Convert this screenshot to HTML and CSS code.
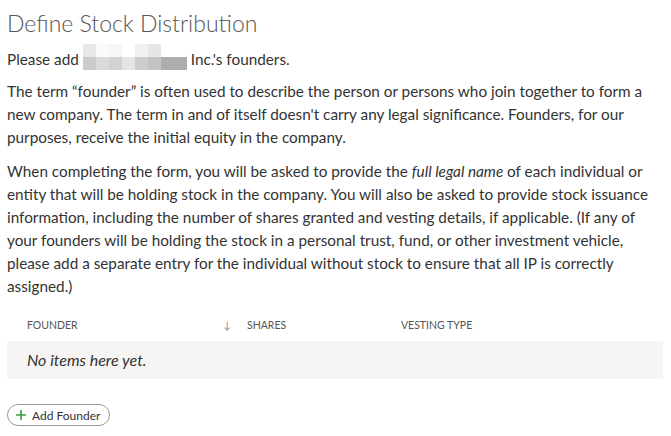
FILE: index.html
```html
<!DOCTYPE html>
<html lang="en">
<head>
    <meta charset="UTF-8">
    <title>Define Stock Distribution</title>
    <link rel="stylesheet" href="styles.css">
</head>
<body>
    <div class="page">
        <h1>Define Stock Distribution</h1>
        <p class="intro">
            Please add
            <span class="redacted">
                <span class="px" style="background:#e8e8e8"></span><span class="px" style="background:#fafafa"></span><span class="px" style="background:#f6f6f6"></span><span class="px" style="background:#fff"></span><span class="px" style="background:#f1f1f1"></span><span class="px" style="background:#e6e6e6"></span><span class="px" style="background:#fff"></span><span class="px" style="background:#fff"></span>
                <span class="px" style="background:#cbcbcb"></span><span class="px" style="background:#dadada"></span><span class="px" style="background:#d2d2d2"></span><span class="px" style="background:#e4e4e4"></span><span class="px" style="background:#cdcdcd"></span><span class="px" style="background:#c4c4c4"></span><span class="px" style="background:#adadad"></span><span class="px" style="background:#adadad"></span>
            </span>
            Inc.'s founders.
        </p>

        <p>The term “founder” is often used to describe the person or persons who join together to form a<br>
        new company. The term in and of itself doesn't carry any legal significance. Founders, for our<br>
        purposes, receive the initial equity in the company.</p>

        <p>When completing the form, you will be asked to provide the <em>full legal name</em> of each individual or<br>
        entity that will be holding stock in the company. You will also be asked to provide stock issuance<br>
        information, including the number of shares granted and vesting details, if applicable. (If any of<br>
        your founders will be holding the stock in a personal trust, fund, or other investment vehicle,<br>
        please add a separate entry for the individual without stock to ensure that all IP is correctly<br>
        assigned.)</p>

        <div class="table">
            <div class="table-head">
                <div class="col col-founder">Founder <span class="sort">&#8595;</span></div>
                <div class="col col-shares">Shares</div>
                <div class="col col-vesting">Vesting Type</div>
            </div>
            <div class="table-empty">No items here yet.</div>
        </div>

        <button class="add-btn">
            <svg width="12" height="12" viewBox="0 0 12 12"><path d="M6 1v10M1 6h10" stroke="#3c9a3c" stroke-width="1.6" fill="none"/></svg>
            Add Founder
        </button>
    </div>
</body>
</html>
```

FILE: styles.css
```css
* {
    margin: 0;
    padding: 0;
    box-sizing: border-box;
}

body {
    font-family: Lato, 'Noto Sans', sans-serif;
    font-size: 15.3px;
    line-height: 23px;
    color: #333;
    background: #fff;
}

.page {
    padding: 8px 7px;
    width: 671px;
}

h1 {
    font-size: 23px;
    font-weight: 300;
    color: #555;
    line-height: 30px;
    margin-bottom: 10px;
}

p {
    margin-bottom: 11px;
}

.intro {
    display: flex;
    align-items: center;
    gap: 4px;
    margin-bottom: 9px;
}

.redacted {
    display: grid;
    grid-template-columns: repeat(8, 13px);
    grid-template-rows: 13px 13px;
    margin-top: -6px;
}

.table {
    width: 656px;
    margin-top: 1px;
}

.table-head {
    display: flex;
    font-size: 10.5px;
    text-transform: uppercase;
    color: #555;
    height: 32px;
    align-items: center;
}

.col {
    padding-left: 20px;
}

.col-founder {
    width: 220px;
    display: flex;
    justify-content: space-between;
}

.sort {
    color: #888;
    font-size: 10px;
    margin-right: -4px;
}

.col-shares {
    width: 154px;
}

.table-empty {
    background: #f6f5f3;
    height: 38px;
    line-height: 38px;
    padding-left: 20px;
    font-style: italic;
    font-size: 16px;
    color: #333;
}

.add-btn {
    margin-top: 25px;
    display: flex;
    align-items: center;
    gap: 5px;
    height: 22px;
    padding: 0 9px 0 7px;
    border: 1px solid #999;
    border-radius: 11px;
    background: #fff;
    font-family: Lato, sans-serif;
    font-size: 12px;
    color: #333;
}
```
